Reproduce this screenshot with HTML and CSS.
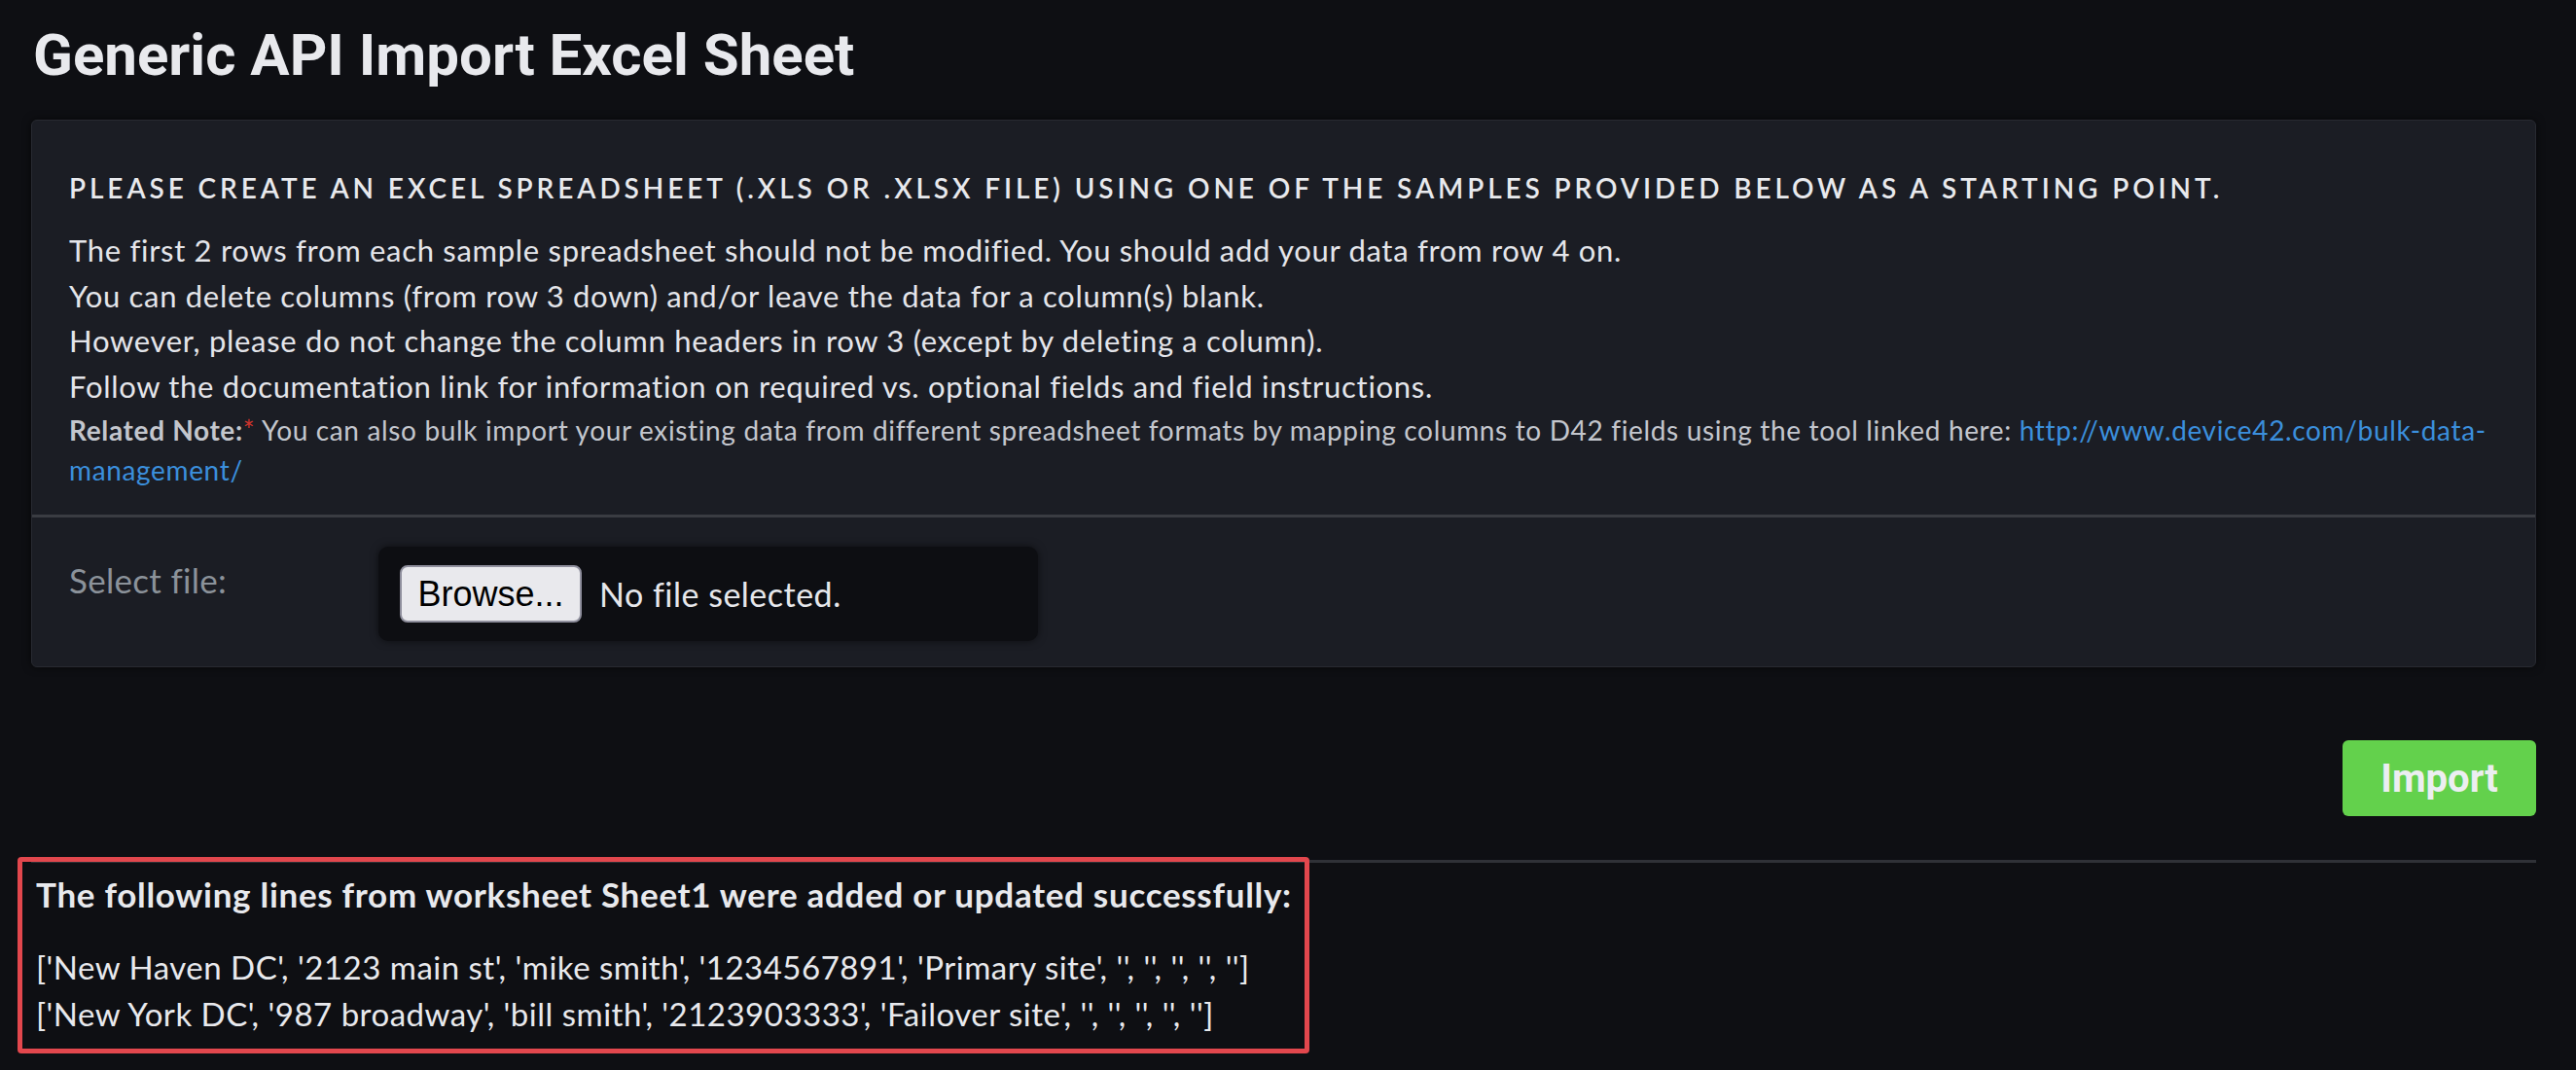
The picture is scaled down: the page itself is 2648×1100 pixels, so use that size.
FILE: index.html
```html
<!DOCTYPE html>
<html>
<head>
<meta charset="utf-8">
<title>Generic API Import Excel Sheet</title>
<link rel="stylesheet" href="styles.css">
</head>
<body>
<div class="page">
  <h1 class="title">Generic API Import Excel Sheet</h1>
  <div class="panel">
    <div class="panel-body">
      <h2 class="panel-heading">Please create an Excel spreadsheet (.xls or .xlsx file) using one of the samples provided below as a starting point.</h2>
      <div class="instructions">
        <p>The first 2 rows from each sample spreadsheet should not be modified. You should add your data from row 4 on.</p>
        <p>You can delete columns (from row 3 down) and/or leave the data for a column(s) blank.</p>
        <p>However, please do not change the column headers in row 3 (except by deleting a column).</p>
        <p>Follow the documentation link for information on required vs. optional fields and field instructions.</p>
      </div>
      <p class="note"><b>Related Note:</b><span class="req">*</span> You can also bulk import your existing data from different spreadsheet formats by mapping columns to D42 fields using the tool linked here: <a class="link" href="#">http://www.device42.com/bulk-data-management/</a></p>
    </div>
    <div class="panel-row">
      <label class="row-label">Select file:</label>
      <div class="file-box">
        <span class="browse">Browse...</span>
        <span class="file-name">No file selected.</span>
      </div>
    </div>
  </div>
  <div class="actions">
    <button class="import-btn">Import</button>
  </div>
  <div class="divider"></div>
  <div class="results">
    <p class="results-heading">The following lines from worksheet Sheet1 were added or updated successfully:</p>
    <p class="result-line">['New Haven DC', '2123 main st', 'mike smith', '1234567891', 'Primary site', '', '', '', '', '']</p>
    <p class="result-line">['New York DC', '987 broadway', 'bill smith', '2123903333', 'Failover site', '', '', '', '', '']</p>
  </div>
</div>
</body>
</html>
```

FILE: styles.css
```css
html, body {
  margin: 0;
  padding: 0;
  background: #0e0f13;
}

body {
  font-family: Lato, "Open Sans", sans-serif;
  color: #e4e5ea;
}

.page {
  padding: 0 41px 0 32px;
}

.title {
  margin: 21px 0 0 2px;
  font-family: Roboto, "Liberation Sans", sans-serif;
  font-weight: 700;
  font-size: 60px;
  line-height: 72px;
  letter-spacing: 0;
  color: #e8e9ed;
}

.panel {
  margin-top: 30px;
  background: #1b1d24;
  border: 1px solid #282a31;
  border-radius: 6px;
  box-shadow: 0 0 8px rgba(0, 0, 0, 0.6);
}

.panel-body {
  padding: 48px 20px 25px 38px;
}

.panel-heading {
  margin: 0 0 20px 0;
  font-size: 28px;
  font-weight: 600;
  line-height: 42px;
  letter-spacing: 3.9px;
  text-transform: uppercase;
  color: #e8e9ed;
}

.instructions p {
  margin: 0;
  font-size: 31px;
  line-height: 46.5px;
  letter-spacing: 0.7px;
  color: #e4e5ea;
}

.note {
  margin: 2px 0 0 0;
  font-size: 28px;
  line-height: 41px;
  letter-spacing: 0.65px;
  color: #c3c6cd;
}

.note b {
  font-weight: 700;
}

.req {
  color: #d0342c;
}

.link {
  color: #3b8fdc;
  text-decoration: none;
}

.panel-row {
  border-top: 3px solid #3a3c42;
  padding: 30px 38px 26px 38px;
  display: grid;
  grid-template-columns: 318px 678px;
  align-items: start;
}

.row-label {
  margin-top: 13px;
  font-size: 35px;
  line-height: 42px;
  letter-spacing: 0.3px;
  color: #8b929a;
}

.file-box {
  height: 97px;
  box-sizing: border-box;
  background: #0d0e12;
  border-radius: 10px;
  box-shadow: 0 0 8px rgba(0, 0, 0, 0.55);
  padding: 0 22px;
  display: flex;
  align-items: center;
  gap: 18px;
}

.browse {
  height: 59px;
  width: 187px;
  box-sizing: border-box;
  display: flex;
  align-items: center;
  justify-content: center;
  background: #e9e9ed;
  border: 2px solid #8f8f9d;
  border-radius: 8px;
  color: #000;
  font-family: "Liberation Sans", Arial, sans-serif;
  font-size: 36px;
}

.file-name {
  font-size: 34px;
  letter-spacing: 0.5px;
  color: #e6e7eb;
}

.actions {
  display: flex;
  justify-content: flex-end;
  margin-top: 75px;
}

.import-btn {
  width: 199px;
  height: 78px;
  background: #63d14c;
  border: none;
  border-radius: 6px;
  color: #eceef1;
  font-family: Roboto, "Liberation Sans", sans-serif;
  font-weight: 700;
  font-size: 40px;
  padding: 0;
}

.divider {
  margin-top: 45px;
  height: 3px;
  background: #2f3137;
}

.results {
  margin: -6px 0 0 -14px;
  width: 1328px;
  box-sizing: border-box;
  border: 5px solid #e2474d;
  border-radius: 4px;
  padding: 13px 4px 12px 14px;
}

.results-heading {
  margin: 0 0 31px 0;
  font-size: 35px;
  font-weight: 700;
  line-height: 40px;
  letter-spacing: 0.7px;
  white-space: nowrap;
  color: #e8e9ed;
}

.result-line {
  margin: 0;
  font-size: 33px;
  line-height: 48px;
  letter-spacing: 0.5px;
  color: #e8e9ed;
}
```
